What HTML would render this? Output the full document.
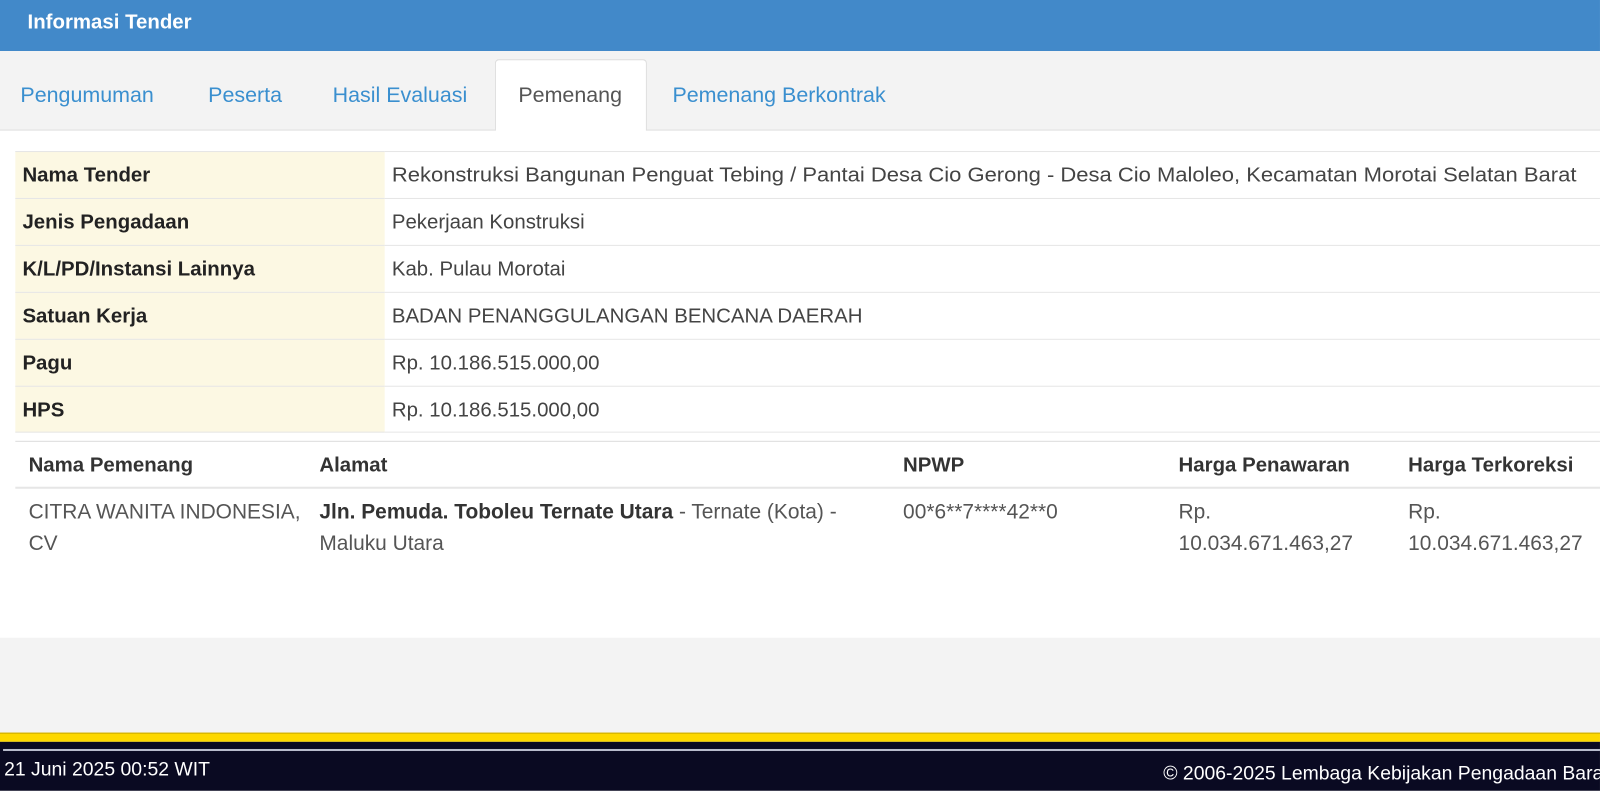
<!DOCTYPE html>
<html><head><meta charset="utf-8"><style>
*{margin:0;padding:0;box-sizing:border-box}
html,body{width:1600px;height:790px;overflow:hidden;background:#f3f3f3}
#wrap{position:absolute;left:0;top:0;width:1568px;height:775px;transform-origin:0 0;transform:scale(1.0204);font-family:"Liberation Sans",sans-serif;color:#333;overflow:hidden}
.a{position:absolute;white-space:nowrap}
#hdr{left:0;top:0;width:1568px;height:50px;background:#4289c9}
#tabs{left:0;top:50px;width:1568px;height:78px;background:#f3f3f3;border-bottom:1px solid #ddd}
.tab{font-size:21px;color:#3a8fcf;top:82px}
#act{left:485px;top:58px;width:149px;height:71px;background:#fff;border:1px solid #ddd;border-bottom:none;border-radius:4px 4px 0 0}
#main{left:0;top:128px;width:1568px;height:497px;background:#fff}
.lab{left:15px;width:362px;height:46px;background:#fcf8e3;border-top:1px solid #e6e6e6}
.row{left:377px;width:1191px;height:46px;border-top:1px solid #e6e6e6}
.lt{left:22px;font-size:20px;font-weight:bold;color:#222}
.vt{left:384px;font-size:20px;color:#444}
.h2{font-size:20px;font-weight:bold;color:#333;top:445px}
.c{font-size:20.5px;color:#555;line-height:31px}
</style></head><body><div id="wrap">
<div class="a" id="hdr"></div>
<div class="a" style="left:27px;top:11px;color:#fff;font-size:20px;font-weight:bold">Informasi Tender</div>
<div class="a" id="tabs"></div>
<div class="a" id="act"></div>
<div class="a tab" style="left:20px">Pengumuman</div>
<div class="a tab" style="left:204px">Peserta</div>
<div class="a tab" style="left:326px">Hasil Evaluasi</div>
<div class="a tab" style="left:508px;color:#555">Pemenang</div>
<div class="a tab" style="left:659px">Pemenang Berkontrak</div>
<div class="a" id="main"></div>

<div class="a lab" style="top:148px"></div><div class="a row" style="top:148px"></div>
<div class="a lab" style="top:194px"></div><div class="a row" style="top:194px"></div>
<div class="a lab" style="top:240px"></div><div class="a row" style="top:240px"></div>
<div class="a lab" style="top:286px"></div><div class="a row" style="top:286px"></div>
<div class="a lab" style="top:332px"></div><div class="a row" style="top:332px"></div>
<div class="a lab" style="top:378px;border-bottom:1px solid #e6e6e6"></div><div class="a row" style="top:378px;border-bottom:1px solid #e6e6e6"></div>

<div class="a lt" style="top:161px">Nama Tender</div>
<div class="a vt" style="top:161px;transform-origin:0 0;transform:scaleX(1.078)">Rekonstruksi Bangunan Penguat Tebing / Pantai Desa Cio Gerong - Desa Cio Maloleo, Kecamatan Morotai Selatan Barat</div>
<div class="a lt" style="top:207px">Jenis Pengadaan</div>
<div class="a vt" style="top:207px">Pekerjaan Konstruksi</div>
<div class="a lt" style="top:253px">K/L/PD/Instansi Lainnya</div>
<div class="a vt" style="top:253px">Kab. Pulau Morotai</div>
<div class="a lt" style="top:299px">Satuan Kerja</div>
<div class="a vt" style="top:299px">BADAN PENANGGULANGAN BENCANA DAERAH</div>
<div class="a lt" style="top:345px">Pagu</div>
<div class="a vt" style="top:345px">Rp. 10.186.515.000,00</div>
<div class="a lt" style="top:391px">HPS</div>
<div class="a vt" style="top:391px">Rp. 10.186.515.000,00</div>

<div class="a" style="left:15px;top:432px;width:1553px;height:47px;border-top:1px solid #ddd;border-bottom:2px solid #e6e6e6"></div>
<div class="a h2" style="left:28px">Nama Pemenang</div>
<div class="a h2" style="left:313px">Alamat</div>
<div class="a h2" style="left:885px">NPWP</div>
<div class="a h2" style="left:1155px">Harga Penawaran</div>
<div class="a h2" style="left:1380px">Harga Terkoreksi</div>
<div class="a c" style="left:28px;top:486px">CITRA WANITA INDONESIA,<br>CV</div>
<div class="a c" style="left:313px;top:486px"><b style="color:#333">Jln. Pemuda. Toboleu Ternate Utara</b> - Ternate (Kota) -<br>Maluku Utara</div>
<div class="a c" style="left:885px;top:486px">00*6**7****42**0</div>
<div class="a c" style="left:1155px;top:486px">Rp.<br>10.034.671.463,27</div>
<div class="a c" style="left:1380px;top:486px">Rp.<br>10.034.671.463,27</div>

<div class="a" style="left:0;top:718px;width:1568px;height:9px;background:#fdd800;border-top:1px solid #c9a800"></div>
<div class="a" style="left:0;top:727px;width:1568px;height:50px;background:#0a0a22"></div>
<div class="a" style="left:3px;top:734px;width:1565px;height:2px;background:#b8bccc"></div>
<div class="a" style="left:4px;top:744px;color:#fff;font-size:19px">21 Juni 2025 00:52 WIT</div>
<div class="a" style="left:1140px;top:748px;color:#fff;font-size:19px">© 2006-2025 Lembaga Kebijakan Pengadaan Barang/Jasa Pemerintah</div>
</div></body></html>
